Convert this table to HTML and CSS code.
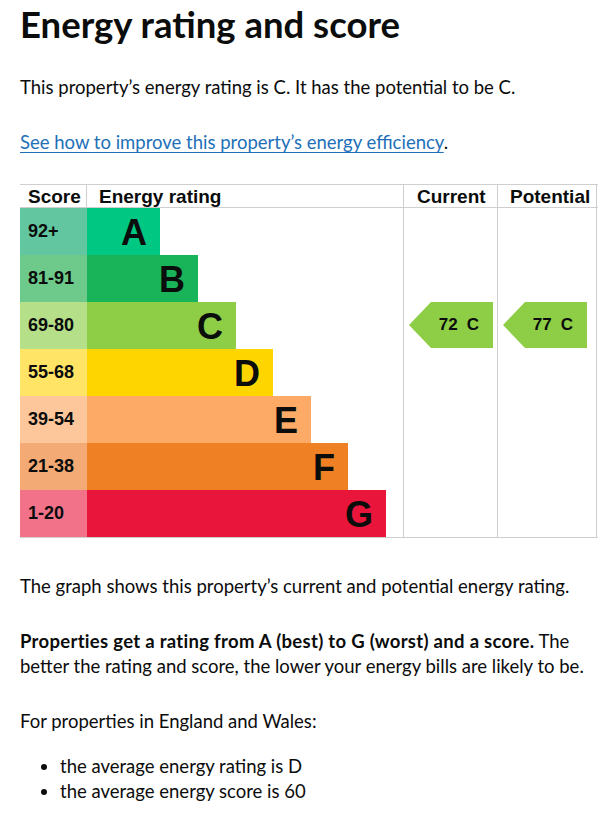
FILE: index.html
```html
<!DOCTYPE html>
<html lang="en">
<head>
<meta charset="utf-8">
<title>Energy rating and score</title>
<link rel="stylesheet" href="styles.css">
</head>
<body>
<main class="page">
  <h1 class="title">Energy rating and score</h1>
  <p class="body-text p-first">This property’s energy rating is C. It has the potential to be C.</p>
  <p class="body-text p-link"><a class="link" href="#">See how to improve this property’s energy efficiency</a>.</p>

  <div class="chart">
    <div class="chart-head">
      <div class="h-score">Score</div>
      <div class="h-rating">Energy rating</div>
      <div class="h-current">Current</div>
      <div class="h-potential">Potential</div>
    </div>
    <div class="chart-body">
      <div class="bands">
        <div class="band"><div class="score s-a">92+</div><div class="bar b-a" style="width:73px">A</div></div>
        <div class="band"><div class="score s-b">81-91</div><div class="bar b-b" style="width:111px">B</div></div>
        <div class="band"><div class="score s-c">69-80</div><div class="bar b-c" style="width:149px">C</div></div>
        <div class="band"><div class="score s-d">55-68</div><div class="bar b-d" style="width:186px">D</div></div>
        <div class="band"><div class="score s-e">39-54</div><div class="bar b-e" style="width:224px">E</div></div>
        <div class="band"><div class="score s-f">21-38</div><div class="bar b-f" style="width:261px">F</div></div>
        <div class="band"><div class="score s-g">1-20</div><div class="bar b-g" style="width:299px">G</div></div>
      </div>
      <div class="col col-current">
        <div class="arrow-slot" style="margin-top:94px">
          <div class="arrow"><span>72</span><span>C</span></div>
        </div>
      </div>
      <div class="col col-potential">
        <div class="arrow-slot" style="margin-top:94px">
          <div class="arrow"><span>77</span><span>C</span></div>
        </div>
      </div>
    </div>
  </div>

  <p class="body-text p-graph">The graph shows this property’s current and potential energy rating.</p>
  <p class="body-text p-props"><strong class="lead">Properties get a rating from A (best) to G (worst) and a score.</strong> The better the rating and score, the lower your energy bills are likely to be.</p>
  <p class="body-text p-for">For properties in England and Wales:</p>
  <ul class="list">
    <li>the average energy rating is D</li>
    <li>the average energy score is 60</li>
  </ul>
</main>
</body>
</html>
```

FILE: styles.css
```css
html, body {
  margin: 0;
  padding: 0;
  background: #ffffff;
}
body {
  color: #0b0c0c;
  font-family: Lato, "Noto Sans", sans-serif;
}
.page {
  padding: 0 20px;
}
.title {
  margin: 0;
  padding-top: 4px;
  font-size: 36.5px;
  line-height: 40px;
  font-weight: 700;
}
.body-text {
  margin: 0;
  font-size: 18.5px;
  line-height: 25px;
}
.p-first {
  margin-top: 31px;
}
.p-link {
  margin-top: 30px;
}
.link {
  color: #1d70b8;
  text-decoration: underline;
  text-underline-offset: 3px;
  text-decoration-thickness: 1px;
}
.chart {
  margin-top: 29px;
  width: 578px;
  font-family: "Liberation Sans", Arial, sans-serif;
  font-weight: 700;
  color: #0b0c0c;
}
.chart-head {
  display: grid;
  grid-template-columns: 67px 317px 94px 99px;
  border-top: 1px solid #cfcfcf;
  border-bottom: 1px solid #cfcfcf;
  height: 22px;
  font-size: 19px;
  line-height: 23px;
}
.h-score {
  padding-left: 8px;
  border-right: 1px solid #cfcfcf;
}
.h-rating {
  padding-left: 12px;
  border-right: 1px solid #cfcfcf;
}
.h-current {
  padding-left: 13px;
  border-right: 1px solid #cfcfcf;
}
.h-potential {
  padding-left: 12px;
  border-right: 1px solid #cfcfcf;
}
.chart-body {
  display: grid;
  grid-template-columns: 384px 94px 99px;
  border-bottom: 1px solid #cfcfcf;
}
.bands {
  display: flex;
  flex-direction: column;
  border-right: 1px solid #cfcfcf;
}
.band {
  display: flex;
  height: 47px;
}
.score {
  width: 59px;
  padding-left: 8px;
  flex: none;
  font-size: 18px;
  line-height: 47px;
}
.bar {
  box-sizing: border-box;
  text-align: right;
  padding-right: 13px;
  font-size: 36px;
  line-height: 49px;
}
.col {
  border-right: 1px solid #cfcfcf;
}
.col-current .arrow-slot {
  padding-left: 5px;
}
.col-potential .arrow-slot {
  padding-left: 5px;
}
.arrow {
  width: 84px;
  height: 46px;
  background: #8dce46;
  clip-path: polygon(22px 0, 100% 0, 100% 100%, 22px 100%, 0 50%);
  display: flex;
  justify-content: flex-end;
  align-items: center;
  gap: 9px;
  padding-right: 14px;
  box-sizing: border-box;
  font-size: 17px;
  line-height: 46px;
}
.s-a { background: #62c6a0; }
.s-b { background: #6dca8a; }
.s-c { background: #b6df8a; }
.s-d { background: #ffe466; }
.s-e { background: #fec79b; }
.s-f { background: #f3aa75; }
.s-g { background: #f27389; }
.b-a { background: #00c781; }
.b-b { background: #19b459; }
.b-c { background: #8dce46; }
.b-d { background: #ffd500; }
.b-e { background: #fcaa65; }
.b-f { background: #ef8023; }
.b-g { background: #e9153b; }
.p-graph {
  margin-top: 36px;
}
.p-props {
  margin-top: 30px;
}
.lead {
  letter-spacing: 0.3px;
}
.p-for {
  margin-top: 30px;
}
.list {
  margin: 20px 0 0 0;
  padding-left: 40px;
  font-size: 18.5px;
  line-height: 25px;
}
```
